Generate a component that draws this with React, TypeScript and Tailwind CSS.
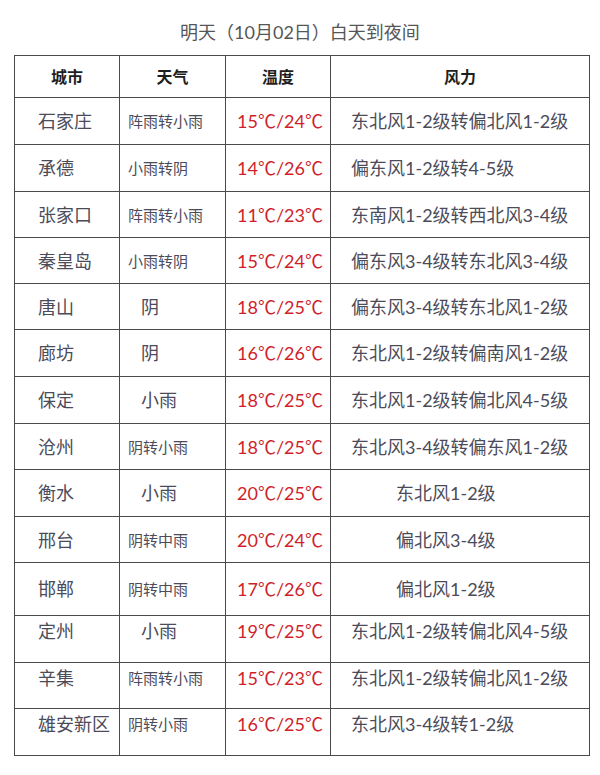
const rows = [
  { city: "石家庄", weather: "阵雨转小雨", temp: "15℃/24℃", wind: "东北风1-2级转偏北风1-2级", h: "h-[47px]" },
  { city: "承德", weather: "小雨转阴", temp: "14℃/26℃", wind: "偏东风1-2级转4-5级", h: "h-[47px]" },
  { city: "张家口", weather: "阵雨转小雨", temp: "11℃/23℃", wind: "东南风1-2级转西北风3-4级", h: "h-[46px]" },
  { city: "秦皇岛", weather: "小雨转阴", temp: "15℃/24℃", wind: "偏东风3-4级转东北风3-4级", h: "h-[46px]" },
  { city: "唐山", weather: "阴", temp: "18℃/25℃", wind: "偏东风3-4级转东北风1-2级", h: "h-[46px]" },
  { city: "廊坊", weather: "阴", temp: "16℃/26℃", wind: "东北风1-2级转偏南风1-2级", h: "h-[47px]" },
  { city: "保定", weather: "小雨", temp: "18℃/25℃", wind: "东北风1-2级转偏北风4-5级", h: "h-[47px]" },
  { city: "沧州", weather: "阴转小雨", temp: "18℃/25℃", wind: "东北风3-4级转偏东风1-2级", h: "h-[46px]" },
  { city: "衡水", weather: "小雨", temp: "20℃/25℃", wind: "东北风1-2级", h: "h-[47px]" },
  { city: "邢台", weather: "阴转中雨", temp: "20℃/24℃", wind: "偏北风3-4级", h: "h-[46px]" },
  { city: "邯郸", weather: "阴转中雨", temp: "17℃/26℃", wind: "偏北风1-2级", h: "h-[53px]" },
  { city: "定州", weather: "小雨", temp: "19℃/25℃", wind: "东北风1-2级转偏北风4-5级", h: "h-[47px]", top: true },
  { city: "辛集", weather: "阵雨转小雨", temp: "15℃/23℃", wind: "东北风1-2级转偏北风1-2级", h: "h-[46px]", top: true },
  { city: "雄安新区", weather: "阴转小雨", temp: "16℃/25℃", wind: "东北风3-4级转1-2级", h: "h-[47px]", top: true },
];

export default function App() {
  return (
    <div
      className="w-[600px] h-[775px] bg-white text-[#4c4b5a]"
      style={{ fontFamily: '"Lato", "Noto Sans CJK SC", sans-serif' }}
    >
      <div className="h-[55px] pt-[19px] text-center text-[18px] leading-[26px] text-[#565656]">
        明天（10月02日）白天到夜间
      </div>
      <table className="ml-[14px] w-[575px] table-fixed border-collapse">
        <colgroup>
          <col className="w-[105px]" />
          <col className="w-[106px]" />
          <col className="w-[105px]" />
          <col className="w-[259px]" />
        </colgroup>
        <thead>
          <tr className="h-[42px]">
            {["城市", "天气", "温度", "风力"].map((t) => (
              <th key={t} className="border border-[#4a4a4a] text-center text-[16px] font-bold text-[#1f1f1f]">
                {t}
              </th>
            ))}
          </tr>
        </thead>
        <tbody>
          {rows.map((r) => {
            const short = r.weather.length <= 2;
            const shortWind = r.wind.length <= 7;
            const pad = r.top ? "pb-[16px]" : "";
            return (
              <tr key={r.city} className={r.h}>
                <td className={`border border-[#4a4a4a] pl-[23px] text-[18px] leading-[24px] whitespace-nowrap ${pad}`}>
                  {r.city}
                </td>
                <td
                  className={`border border-[#4a4a4a] whitespace-nowrap ${pad} ${
                    short ? "pl-[21px] text-[18px]" : "pl-[8px] text-[15px]"
                  } leading-[24px]`}
                >
                  {r.weather}
                </td>
                <td className={`border border-[#4a4a4a] pl-[11px] text-[18px] leading-[24px] text-[#cf1f2b] whitespace-nowrap ${pad}`}>
                  {r.temp}
                </td>
                <td
                  className={`border border-[#4a4a4a] text-[18px] leading-[24px] whitespace-nowrap ${pad} ${
                    shortWind ? "pl-[65px]" : "pl-[20px]"
                  }`}
                >
                  {r.wind}
                </td>
              </tr>
            );
          })}
        </tbody>
      </table>
    </div>
  );
}
